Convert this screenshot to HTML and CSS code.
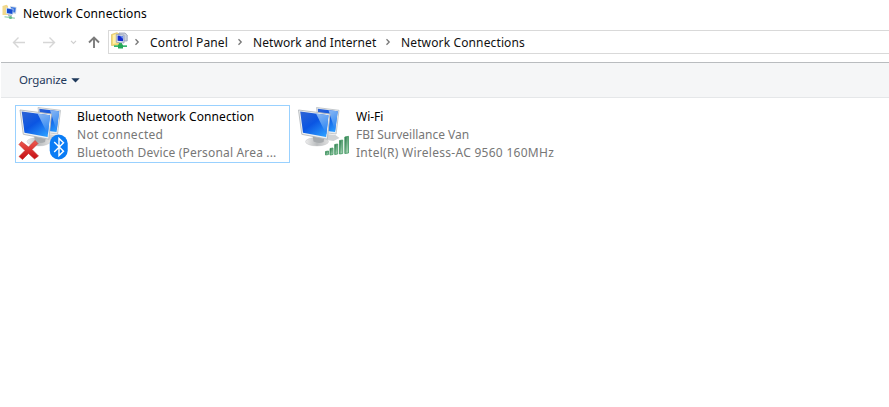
FILE: index.html
```html
<!DOCTYPE html>
<html lang="en">
<head>
<meta charset="utf-8">
<title>Network Connections</title>
<link rel="stylesheet" href="styles.css">
</head>
<body>
<svg class="defs" width="0" height="0">
  <defs>
    <linearGradient id="screen" x1="0" y1="0" x2=".8" y2="1"><stop offset="0" stop-color="#2f64d4"/><stop offset=".5" stop-color="#0b55e2"/><stop offset="1" stop-color="#2a9cff"/></linearGradient>
    <linearGradient id="shine" x1="0" y1="0" x2=".3" y2="1"><stop offset="0" stop-color="#8db8f2"/><stop offset="1" stop-color="#2a86f4"/></linearGradient>
    <linearGradient id="bar" x1="0" y1="0" x2="1" y2="1"><stop offset="0" stop-color="#1d7040"/><stop offset="1" stop-color="#c0eacb"/></linearGradient>
    <linearGradient id="cross" x1="0" y1="0" x2="0" y2="1"><stop offset="0" stop-color="#ef5a50"/><stop offset="1" stop-color="#c40c12"/></linearGradient>
    <linearGradient id="metal" x1="0" y1="0" x2="1" y2="0"><stop offset="0" stop-color="#ededed"/><stop offset=".5" stop-color="#b9bcbe"/><stop offset="1" stop-color="#e0e0e0"/></linearGradient>
    <symbol id="pcs" viewBox="0 0 54 56">
      <path d="M29 28L38 29 42 32 36 35 29 34Z" fill="#d0d3d5"/>
      <path d="M19 1.5L41.5 4.3 38.6 28 22 26Z" fill="#e9edf0" stroke="#b9bec2" stroke-width=".8"/>
      <path d="M20.3 2.8L40.2 5.3 37.5 26 22 24Z" fill="url(#screen)"/>
      <path d="M31 4.2L40.2 5.3 37.7 25Z" fill="url(#shine)"/>
      <ellipse cx="19.5" cy="35.7" rx="11.5" ry="4.2" fill="url(#metal)" stroke="#c5c7c8" stroke-width=".5"/>
      <path d="M15 29L27 31 26 36Q21 38 16 35.5Z" fill="#a7abae"/>
      <path d="M1 4L32.5 8 29.8 33.2 4.3 28.3Z" fill="#eef1f3" stroke="#b4b9bd" stroke-width=".9"/>
      <path d="M2.7 5.6L31 9.2 28.6 31 5.5 26.7Z" fill="url(#screen)"/>
      <path d="M18.5 7.6L31 9.2 28.9 28.5Z" fill="url(#shine)"/>
    </symbol>
    <symbol id="net" viewBox="0 0 17 17">
      <path d="M.5 2.5L6 .7 8 2V13L.5 13.5Z" fill="#f6dc78" stroke="#d7bd62" stroke-width=".7"/>
      <path d="M2 3L6 2V11L2 12Z" fill="#fff0a9"/>
      <path d="M8 1H14L16.2 3V9H8Z" fill="#c9d0de" stroke="#8994ac" stroke-width=".7"/>
      <path d="M5.3 2.3L13 3.2V11L5.3 10.3Z" fill="#e0e7f2" stroke="#8793ab" stroke-width=".7"/>
      <path d="M6.6 3.5L12.1 4.2V9.3L6.6 8.8Z" fill="#142cd0"/>
      <path d="M9 4L12.1 4.3V7Z" fill="#6f94f4"/>
      <path d="M8 11H11V13H8Z" fill="#34ab62"/>
      <path d="M3 13.3H16V15H3Z" fill="#35b66b"/>
      <path d="M7 12.5H12V16.5H7Z" fill="#23a757"/>
    </symbol>
  </defs>
</svg>
<header class="titlebar">
  <svg class="app-icon" width="16" height="16" viewBox="0 0 16 16">
    <path d="M.5 2L4.5.7 6 2V11L.5 11Z" fill="#f2d98c"/>
    <path d="M8 2L14.6 3 14 10 8 9Z" fill="#ccd9e8"/>
    <path d="M9 3L13.8 3.8 13.2 8.5 9 8Z" fill="#3672df"/>
    <path d="M4 3.5L11.5 4.7 11 11 4 9.8Z" fill="#cbdcf2"/>
    <path d="M5 4.6L10.8 5.6 10.3 9.9 5 9Z" fill="#174dd2"/>
    <path d="M6 10L10 11 10 12.5H6Z" fill="#b6bfc7"/>
    <path d="M2.5 12L13 13.5 12.8 15 2.5 13.5Z" fill="#a9d9be"/><circle cx="8.5" cy="13.5" r="1.6" fill="#63bc88"/>
  </svg>
  <span class="title">Network Connections</span>
</header>
<nav class="navbar">
  <svg class="arrows" width="108" height="26" viewBox="0 0 108 26" fill="none">
    <path d="M25 12.5H13.8M18.5 7.5L13.5 12.5 18.5 17.5" stroke="#d6d6d6" stroke-width="1.4"/>
    <path d="M43 12.5H54.2M49.5 7.5L54.5 12.5 49.5 17.5" stroke="#d6d6d6" stroke-width="1.4"/>
    <path d="M71 10.8L73.5 13.3 76 10.8" stroke="#cfcfcf" stroke-width="1.2"/>
    <path d="M94 18V7.5M89 12.5L94 7.5 99 12.5" stroke="#7b7b7b" stroke-width="1.9"/>
  </svg>
  <div class="address">
    <svg class="net-icon" width="17" height="17"><use href="#net"/></svg>
    <svg class="sep" width="6" height="8" viewBox="0 0 6 8"><path d="M1.5 1.3L4.2 4 1.5 6.7"/></svg>
    <span class="crumb crumb-panel">Control Panel</span>
    <svg class="sep" width="6" height="8" viewBox="0 0 6 8"><path d="M1.5 1.3L4.2 4 1.5 6.7"/></svg>
    <span class="crumb crumb-internet">Network and Internet</span>
    <svg class="sep" width="6" height="8" viewBox="0 0 6 8"><path d="M1.5 1.3L4.2 4 1.5 6.7"/></svg>
    <span class="crumb crumb-connections">Network Connections</span>
  </div>
</nav>
<div class="toolbar">
  <span class="organize">Organize</span>
  <svg width="9" height="5" viewBox="0 0 9 5"><path d="M.3 .3H8.7L4.5 4.6Z" fill="#1e395b"/></svg>
</div>
<main class="items">
  <section class="item selected">
    <svg class="device" width="54" height="56" viewBox="0 0 54 56">
      <use href="#pcs" x="1" width="54" height="56"/>
      <path d="M3.5 35.5L10.5 41 17 34.5 20 37.5 14 43.5 20.5 50 16.5 53 10.5 47.5 4.5 53.5 1 50.5 7 44.5 1 38.5Z" fill="url(#cross)" stroke="#c3302e" stroke-width=".6"/>
      <rect x="31.7" y="28.5" width="18" height="25" rx="9" fill="#0a7cf5"/>
      <path d="M36.2 36L45.5 45.2 41 49.5V32.5L45.5 36.8 36.2 46" fill="none" stroke="#fff" stroke-width="1.4"/>
    </svg>
    <div class="details"><div class="name name-bluetooth">Bluetooth Network Connection</div><div class="status-bluetooth">Not connected</div><div class="device-bluetooth">Bluetooth Device (Personal Area ...</div></div>
  </section>
  <section class="item">
    <svg class="device" width="54" height="56" viewBox="0 0 54 56">
      <use href="#pcs" x=".5" width="54" height="56"/>
      <g fill="url(#bar)" stroke="#3f9560" stroke-width=".8">
        <path d="M28.5 45.5L31.5 45V48.5L28.5 49Z"/><path d="M33 42.5L36 42V48.5L33 49Z"/><path d="M37.7 38.5L40.7 38V48L37.7 48.5Z"/><path d="M42.5 34.5L45.7 34V47.5L42.5 48Z"/><path d="M47.8 31L51.5 30.3V47L47.8 47.5Z"/>
      </g>
    </svg>
    <div class="details"><div class="name name-wifi">Wi-Fi</div><div class="status-wifi">FBI Surveillance Van</div><div class="device-wifi">Intel(R) Wireless-AC 9560 160MHz</div></div>
  </section>
</main>
</body>
</html>
```
FILE: styles.css
```css
* { box-sizing: border-box; }
body { margin: 0; width: 889px; height: 407px; overflow: hidden; background: #fff; color: #000; font: 12px/18px "Noto Sans", "Open Sans", sans-serif; white-space: nowrap; }
svg { display: block; flex: none; }
.defs { position: absolute; }
.titlebar { display: flex; height: 30px; padding: 5px 0 0 2px; }
.app-icon { margin: -1px 5px 0 0; }
.title, .crumb-connections { letter-spacing: .13px; }
.navbar { display: flex; height: 32px; }
.address { display: flex; flex: 1; align-items: center; height: 24px; border: 1px solid #d9d9d9; border-right: 0; padding-left: 2px; color: #111; }
.net-icon { margin: -3px 6px 0 0; }
.sep { fill: none; stroke: #777; stroke-width: 1.3; }
.crumb { margin: 2px 9px 0 10px; }
.crumb-panel { width: 78px; letter-spacing: .15px; }
.crumb-internet { width: 123px; letter-spacing: .06px; }
.toolbar { display: flex; align-items: center; gap: 5px; height: 36px; margin-left: 1px; padding-left: 18px; border-top: 1px solid #b9bcbf; border-bottom: 1px solid #e5e7e9; background: #f5f6f7; color: #1e395b; }
.organize { width: 47px; font-size: 11.5px; letter-spacing: -.15px; }
.items { display: flex; gap: 4px; padding: 7px 0 0 15px; }
.item { display: flex; width: 275px; height: 58px; border: 1px solid transparent; }
.selected { border-color: #99d1ff; }
.device { margin: 0 0 0 2px; }
.details { margin: 2px 0 0 5px; color: #777; }
.name { color: #000; }
.name-bluetooth { letter-spacing: .1px; }
.status-bluetooth { letter-spacing: .27px; }
.device-bluetooth { letter-spacing: .17px; }
.device-wifi { letter-spacing: .28px; }
```
